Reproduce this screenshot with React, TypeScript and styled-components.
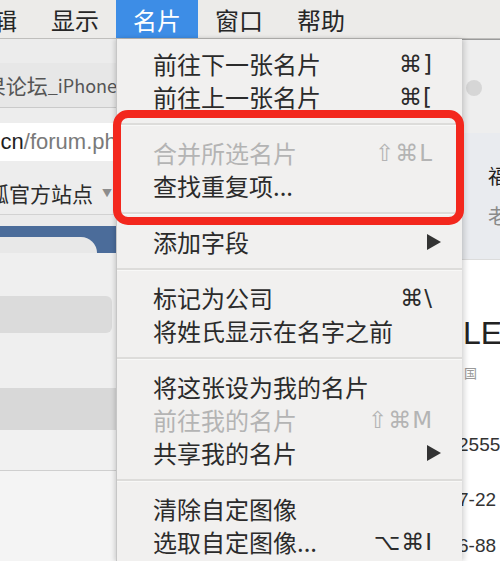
import styled, { createGlobalStyle } from "styled-components";

const GlobalStyle = createGlobalStyle`
  html, body {
    margin: 0;
    padding: 0;
    background: #ffffff;
  }
  body {
    font-family: "Noto Sans CJK SC", "Noto Sans", sans-serif;
  }
`;

type MenuEntry =
  | { kind: "sep" }
  | { kind: "item"; label: string; shortcut?: string; disabled?: boolean; submenu?: boolean };

const entries: MenuEntry[] = [
  { kind: "item", label: "前往下一张名片", shortcut: "⌘]" },
  { kind: "item", label: "前往上一张名片", shortcut: "⌘[" },
  { kind: "sep" },
  { kind: "item", label: "合并所选名片", shortcut: "⇧⌘L", disabled: true },
  { kind: "item", label: "查找重复项..." },
  { kind: "sep" },
  { kind: "item", label: "添加字段", submenu: true },
  { kind: "sep" },
  { kind: "item", label: "标记为公司", shortcut: "⌘\\" },
  { kind: "item", label: "将姓氏显示在名字之前" },
  { kind: "sep" },
  { kind: "item", label: "将这张设为我的名片" },
  { kind: "item", label: "前往我的名片", shortcut: "⇧⌘M", disabled: true },
  { kind: "item", label: "共享我的名片", submenu: true },
  { kind: "sep" },
  { kind: "item", label: "清除自定图像" },
  { kind: "item", label: "选取自定图像...", shortcut: "⌥⌘I" },
];

const Screen = styled.div`
  width: 500px;
  height: 561px;
  overflow: hidden;
  display: grid;
  grid-template-rows: 39px 1fr;
`;

/* ---------- top menu bar ---------- */

const MenuBar = styled.div`
  display: flex;
  align-items: stretch;
  background: #ecebe9;
  border-bottom: 1px solid #bfbebc;
  overflow: hidden;
`;

const BarItem = styled.div<{ $active?: boolean; $cut?: boolean }>`
  display: flex;
  align-items: center;
  padding: 0 17px;
  margin-left: ${(p) => (p.$cut ? "-48px" : "0")};
  font-size: 24px;
  color: ${(p) => (p.$active ? "#ffffff" : "#262626")};
  background: ${(p) => (p.$active ? "#3d8de6" : "transparent")};
  white-space: nowrap;
`;

/* ---------- content row ---------- */

const Body = styled.div`
  display: grid;
  grid-template-columns: 116px 346px 1fr;
  min-height: 0;
`;

/* left: browser window behind the menu */

const LeftPane = styled.div`
  display: flex;
  flex-direction: column;
  background: #ededed;
  overflow: hidden;
`;

const Strip = styled.div<{ $h: number; $bg?: string }>`
  height: ${(p) => p.$h}px;
  flex-shrink: 0;
  background: ${(p) => p.$bg ?? "transparent"};
`;

const TabBar = styled.div`
  height: 46px;
  display: flex;
  align-items: center;
  justify-content: flex-end;
  background: #e7e7e7;
  border-bottom: 1px solid #cacaca;
  font-size: 21px;
  color: #555;
  white-space: nowrap;
  margin-right: -1px;

  span {
    font-size: 18px;
  }
`;

const AddressField = styled.div`
  height: 40px;
  display: flex;
  align-items: center;
  justify-content: flex-end;
  background: #ffffff;
  font-family: "Liberation Sans", "Noto Sans", sans-serif;
  font-size: 22px;
  color: #7a7a7a;
  white-space: nowrap;
  margin-right: -13px;

  b {
    font-weight: normal;
    color: #1f1f1f;
  }
`;

const Bookmarks = styled.div`
  height: 45px;
  display: flex;
  align-items: center;
  justify-content: flex-end;
  gap: 9px;
  font-size: 21px;
  color: #2b2b2b;
  white-space: nowrap;
  border-bottom: 1px solid #d2d2d2;
  padding-right: 4px;

  span {
    font-size: 10px;
    color: #8d8d8d;
  }
`;

const BlueBar = styled.div`
  height: 28px;
  display: flex;
  align-items: flex-end;
  background: #4b6c9a;
`;

const BlueTab = styled.div`
  width: 97px;
  height: 16px;
  background: #e8e8e8;
  border-top-right-radius: 16px;
`;

const Sidebar = styled.div`
  flex: 1;
  display: flex;
  flex-direction: column;
  background: #efefef;
  padding-top: 43px;
`;

const SearchBox = styled.div`
  height: 37px;
  width: 112px;
  background: #dbdbdb;
  border-radius: 0 6px 6px 0;
`;

const Band = styled.div<{ $h: number; $bg: string; $mt?: number; $line?: boolean }>`
  height: ${(p) => p.$h}px;
  margin-top: ${(p) => p.$mt ?? 0}px;
  background: ${(p) => p.$bg};
  border-bottom: ${(p) => (p.$line ? "1px solid #cfcfcf" : "none")};
`;

/* middle: the dropdown menu */

const Menu = styled.div`
  position: relative;
  background: #f1f0ef;
  padding-top: 8px;
  border-left: 1px solid #c6c6c6;
  box-shadow: -2px 0 4px rgba(0, 0, 0, 0.12), 3px 0 5px rgba(0, 0, 0, 0.14);
  z-index: 1;
`;

const Item = styled.div<{ $disabled?: boolean }>`
  height: 33px;
  display: flex;
  align-items: center;
  padding: 0 29px 0 36px;
  font-size: 24px;
  color: ${(p) => (p.$disabled ? "#b4b4b4" : "#2b2b2b")};
  white-space: nowrap;
`;

const Shortcut = styled.span`
  margin-left: auto;
  font-family: "DejaVu Sans", sans-serif;
  font-size: 23px;
  letter-spacing: 1px;
`;

const Arrow = styled.svg`
  margin-left: auto;
  margin-right: -9px;
  width: 16px;
  height: 18px;
`;

const Separator = styled.div`
  height: 23px;
  display: flex;
  align-items: center;

  &::after {
    content: "";
    flex: 1;
    height: 2px;
    background: #dddcda;
    border-bottom: 1px solid #f8f8f7;
  }
`;

/* annotation drawn over the menu */
const Highlight = styled.div`
  position: absolute;
  top: 71px;
  left: -4px;
  width: 351px;
  height: 115px;
  box-sizing: border-box;
  border: 8px solid #f3271d;
  border-radius: 15px;
  pointer-events: none;
`;

/* right: contact card behind the menu */

const RightPane = styled.div`
  display: flex;
  flex-direction: column;
  background: #ffffff;
  overflow: hidden;
  white-space: nowrap;
`;

const RightTop = styled.div`
  height: 94px;
  background: #eeeeee;
  border-top: 1px solid #9a9a9a;
  padding: 40px 0 0 4px;
  box-sizing: border-box;
`;

const Dot = styled.div`
  width: 16px;
  height: 16px;
  border-radius: 50%;
  background: #d6d6d6;
`;

const CardHeader = styled.div`
  height: 127px;
  background: #e9ebef;
  border-bottom: 1px solid #dcdcdc;
  box-sizing: border-box;
  padding: 33px 0 0 26px;
  font-size: 20px;
  line-height: 20px;
  color: #1e1e1e;

  div + div {
    margin-top: 20px;
    color: #8a8a8a;
  }
`;

const BigName = styled.div`
  margin-top: 57px;
  font-family: "Liberation Sans", sans-serif;
  font-size: 32px;
  font-weight: 300;
  line-height: 32px;
  color: #222;
  padding-left: 1px;
`;

const SmallMark = styled.div`
  margin-top: 14px;
  font-size: 13px;
  color: #999;
  padding-left: 2px;
`;

const Phone = styled.div<{ $mt: number }>`
  margin-top: ${(p) => p.$mt}px;
  font-family: "Liberation Sans", sans-serif;
  font-size: 19px;
  line-height: 19px;
  color: #333;
  margin-left: -4px;
`;

export default function App() {
  return (
    <>
      <GlobalStyle />
      <Screen>
        <MenuBar>
          <BarItem $cut>编辑</BarItem>
          <BarItem>显示</BarItem>
          <BarItem $active>名片</BarItem>
          <BarItem>窗口</BarItem>
          <BarItem>帮助</BarItem>
        </MenuBar>

        <Body>
          <LeftPane>
            <Strip $h={24} $bg="#ececec" />
            <TabBar>
              果论坛<span>_iPhone</span>
            </TabBar>
            <Strip $h={15} />
            <AddressField>
              <b>cn</b>/forum.php
            </AddressField>
            <Strip $h={10} />
            <Bookmarks>
              狐官方站点<span>▼</span>
            </Bookmarks>
            <Strip $h={11} $bg="#ebebeb" />
            <BlueBar>
              <BlueTab />
            </BlueBar>
            <Sidebar>
              <SearchBox />
              <Band $mt={55} $h={42} $bg="#d8d8d8" />
              <Band $h={40} $bg="#f1f1f1" $line />
              <Band $h={90} $bg="#f4f4f4" />
            </Sidebar>
          </LeftPane>

          <Menu>
            {entries.map((e, i) =>
              e.kind === "sep" ? (
                <Separator key={i} />
              ) : (
                <Item key={i} $disabled={e.disabled}>
                  {e.label}
                  {e.shortcut && <Shortcut>{e.shortcut}</Shortcut>}
                  {e.submenu && (
                    <Arrow viewBox="0 0 16 18">
                      <polygon points="1,1 15,9 1,17" fill="#333" />
                    </Arrow>
                  )}
                </Item>
              )
            )}
            <Highlight />
          </Menu>

          <RightPane>
            <RightTop>
              <Dot />
            </RightTop>
            <CardHeader>
              <div>福</div>
              <div>老</div>
            </CardHeader>
            <BigName>LE</BigName>
            <SmallMark>国</SmallMark>
            <Phone $mt={53}>2555</Phone>
            <Phone $mt={36}>7-22</Phone>
            <Phone $mt={27}>6-88</Phone>
          </RightPane>
        </Body>
      </Screen>
    </>
  );
}
